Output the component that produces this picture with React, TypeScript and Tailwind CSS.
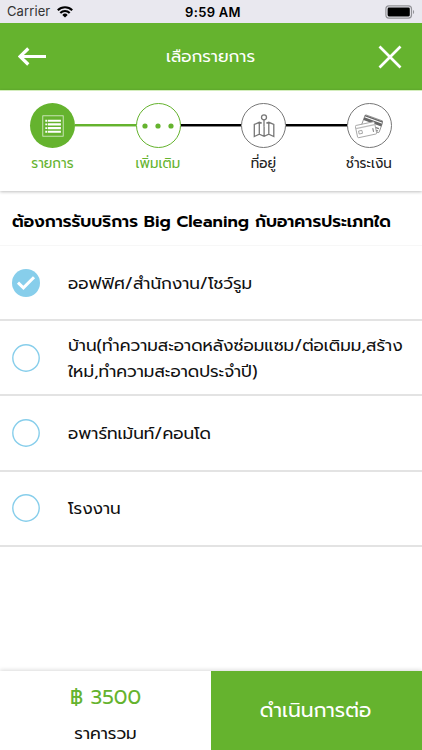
import type { ReactNode } from "react";

const thai = "font-['Prompt','Noto_Sans_Thai','Noto_Sans','Open_Sans',sans-serif]";

function StatusBar() {
  return (
    <header className="grid h-[23px] grid-cols-3 items-center bg-[#e9e8ef] px-[7px] font-['Inter','Liberation_Sans',sans-serif] text-black">
      <div className="flex items-center gap-[7px] pt-px text-[13px] text-[#333]">
        <span className="tracking-[0.1px]">Carrier</span>
        <svg className="mb-px" width="16" height="12" viewBox="0 0 16 12" fill="none" stroke="#000" strokeWidth="2.1">
          <path d="M.8 4.3a10.2 10.2 0 0 1 14.4 0" />
          <path d="M3.3 7a6.6 6.6 0 0 1 9.4 0" />
          <path d="M8 11.6 5.3 8.9a3.8 3.8 0 0 1 5.4 0Z" fill="#000" stroke="none" />
        </svg>
      </div>
      <div className="pl-[4px] pt-[2px] text-center text-[13px] font-semibold tracking-[0.3px]">9:59 AM</div>
      <div className="flex justify-end">
        <svg width="30" height="14" viewBox="0 0 30 14">
          <rect x=".9" y=".9" width="25.6" height="12.2" rx="3" fill="#e9e8ef" stroke="#929297" strokeWidth="1.2" />
          <rect x="2.6" y="2.6" width="22.2" height="8.8" rx="1.3" />
          <path d="M28 5v4c1.5-.6 1.5-3.4 0-4" fill="#929297" />
        </svg>
      </div>
    </header>
  );
}

function ListIcon() {
  return (
    <svg width="22" height="22" viewBox="0 0 22 22" fill="none" stroke="#fff">
      <rect x=".8" y=".8" width="20.4" height="20.4" strokeWidth=".8" opacity=".8" />
      <path d="M3.3 5.7h2M3.3 9.4h2M3.3 13.1h2M3.3 16.8h2" strokeWidth="1.9" />
      <path d="M6 5.7h12.9M6 9.4h12.9M6 13.1h12.9M6 16.8h12.9" strokeWidth="2.1" />
    </svg>
  );
}

function DotsIcon() {
  return (
    <svg width="34" height="6" viewBox="0 0 34 6" fill="#65b32e">
      <circle cx="4" cy="3" r="2.6" />
      <circle cx="17" cy="3" r="2.6" />
      <circle cx="30" cy="3" r="2.6" />
    </svg>
  );
}

function MapIcon() {
  return (
    <svg width="22" height="24" viewBox="0 0 22 24" fill="none" stroke="#777" strokeWidth="1.3">
      <circle cx="11" cy="3.3" r="2.5" />
      <path d="M11 5.8v7" />
      <path d="M8.8 9.2 6.3 8.3 1.3 10.5v12l5-2.3 4.8 2.1 4.7-2.1 5 2.3v-12l-5-2.2-2.5.9M6.3 8.5V20M11.1 12.7v9.4M15.8 8.5V20" />
    </svg>
  );
}

function CardsIcon() {
  return (
    <svg width="28" height="26" viewBox="0 0 28 26">
      <g transform="rotate(20 17 11)">
        <rect x="7.5" y="4.5" width="19" height="12.5" rx="1" fill="#fff" stroke="#888" strokeWidth=".8" />
        <path d="M7.5 4.8h19v1.5h-19zM7.5 7.3h19v2.8h-19z" fill="#666" />
        <path d="M20 13h5M22 15.5h3" stroke="#777" strokeWidth="1.1" />
      </g>
      <g transform="rotate(-12 11 17)">
        <rect x="1.3" y="10.5" width="19.5" height="12.5" rx="1" fill="#fff" stroke="#999" strokeWidth=".8" />
        <path d="M1.5 13.6h19" stroke="#bbb" strokeWidth="1.2" />
        <rect x="3.5" y="16.5" width="3.4" height="3" fill="none" stroke="#999" strokeWidth=".8" />
        <path d="M18 16.5v4" stroke="#888" strokeWidth="1.1" />
      </g>
    </svg>
  );
}

function Step({ icon, circle, label, labelClass }: { icon: ReactNode; circle: string; label: string; labelClass: string }) {
  return (
    <div className="flex w-[45px] shrink-0 flex-col items-center">
      <div className={`flex size-[45px] items-center justify-center rounded-full ${circle}`}>{icon}</div>
      <span className={`mr-[1px] mt-[6px] whitespace-nowrap text-[13.5px] leading-[20px] ${labelClass}`}>{label}</span>
    </div>
  );
}

function Connector({ tone }: { tone: string }) {
  return <div className={`mt-[21px] h-[3px] w-[60.5px] border-b ${tone}`} />;
}

function Stepper() {
  return (
    <nav className="flex h-[101px] items-start border-t border-[#d3edbc] bg-white pl-[30.4px] pt-[12px] shadow-[0_1px_3px_rgba(0,0,0,0.25)]">
      <Step icon={<ListIcon />} circle="bg-[#65b32e]" label="รายการ" labelClass="text-[#65b32e]" />
      <Connector tone="bg-[#65b32e] border-[#b9dca0]" />
      <Step icon={<DotsIcon />} circle="border-[1.5px] border-[#65b32e]" label="เพิ่มเติม" labelClass="text-[#65b32e]" />
      <Connector tone="bg-black border-[#888]" />
      <Step icon={<MapIcon />} circle="border border-[#777]" label="ที่อยู่" labelClass="text-[#222]" />
      <Connector tone="bg-black border-[#888]" />
      <Step icon={<CardsIcon />} circle="border border-[#777]" label="ชำระเงิน" labelClass="text-[#222]" />
    </nav>
  );
}

function Option({ lines, checked = false }: { lines: string[]; checked?: boolean }) {
  return (
    <li className="flex h-[75.2px] items-center border-b-2 border-[#e3e3e3] bg-white pl-[12px]">
      {checked ? (
        <span className="flex size-[28px] items-center justify-center rounded-full bg-[#87ceeb]">
          <svg width="20" height="16" viewBox="0 0 20 16" fill="none" stroke="#fff" strokeWidth="3">
            <path d="m2 7.6 5.4 5.2L18 2.2" />
          </svg>
        </span>
      ) : (
        <svg width="28" height="28" viewBox="0 0 28 28" fill="none" stroke="#87ceeb" strokeWidth="1.4">
          <circle cx="14" cy="14" r="13.2" />
        </svg>
      )}
      <div className="ml-[28px] pt-[2px] text-[16.85px] leading-[26px] text-[#111]">
        {lines.map((line) => (
          <p key={line} className="whitespace-nowrap">{line}</p>
        ))}
      </div>
    </li>
  );
}

export default function App() {
  return (
    <div className={`flex h-[750px] w-[422px] flex-col overflow-hidden bg-white ${thai}`}>
      <StatusBar />
      <div className="flex h-[67px] items-center justify-between bg-[#65b32e] pl-[18px] pr-[20px] text-white">
        <svg width="28" height="20" viewBox="0 0 28 20" fill="none" stroke="#fff" strokeWidth="3.2">
          <path d="M28 9.5H2M10.3 1.5 2 9.5l8.3 8" />
        </svg>
        <h1 className="mr-[3px] whitespace-nowrap text-[16.85px]">เลือกรายการ</h1>
        <svg width="24" height="24" viewBox="0 0 24 24" fill="none" stroke="#fff" strokeWidth="2.7">
          <path d="m1.5 1.5 21 21M22.5 1.5l-21 21" />
        </svg>
      </div>
      <Stepper />
      <h2 className="flex h-[55px] items-center whitespace-nowrap border-b border-[#f7f7f7] pl-[12px] pt-[8px] text-[16.85px] font-semibold text-black">
        ต้องการรับบริการ Big Cleaning กับอาคารประเภทใด
      </h2>
      <ul>
        <Option checked lines={["ออฟฟิศ/สำนักงาน/โชว์รูม"]} />
        <Option lines={["บ้าน(ทำความสะอาดหลังซ่อมแซม/ต่อเติมม,สร้าง", "ใหม่,ทำความสะอาดประจำปี)"]} />
        <Option lines={["อพาร์ทเม้นท์/คอนโด"]} />
        <Option lines={["โรงงาน"]} />
      </ul>
      <footer className="mt-auto flex h-[79px] bg-white shadow-[0_-1px_4px_rgba(0,0,0,0.15)]">
        <div className="flex w-[211px] flex-col items-center">
          <span className="mt-[11px] text-[20.25px] leading-[32px] text-[#65b32e]">฿ 3500</span>
          <span className="mt-[8px] text-[16.85px] leading-[24px] text-[#111]">ราคารวม</span>
        </div>
        <button className="flex flex-1 items-center justify-center bg-[#65b32e] pr-[2px] pt-[1px] text-[20.25px] text-white">ดำเนินการต่อ</button>
      </footer>
    </div>
  );
}
